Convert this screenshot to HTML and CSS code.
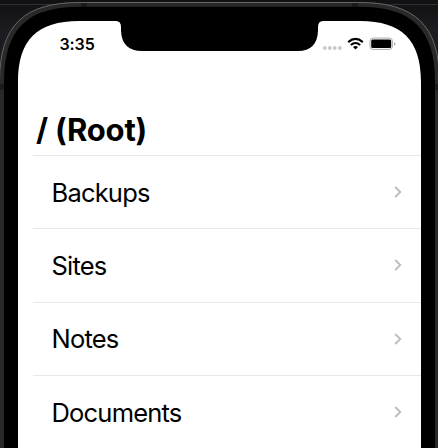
FILE: index.html
```html
<!DOCTYPE html>
<html lang="en">
<head>
<meta charset="utf-8">
<title>Root</title>
<link rel="stylesheet" href="styles.css">
</head>
<body>
<main class="device">
  <svg class="frame" viewBox="0 0 438 448" aria-hidden="true">
    <path d="M0 4.5H438" stroke="#302f32" stroke-width="1"/>
    <path d="M-.5 460V82C-.5 24 25 2 80 2H359C414 2 439.5 24 439.5 82V460Z" fill="#29292a"/>
    <path d="M-.5 460V82C-.5 24 25 2.5 80 2.5H359C414 2.5 439.5 24 439.5 82V460" fill="none" stroke="#656566"/>
    <path d="M81 3h6v4h-6zM352 3h6v4h-6zM0 84h4v6H0zM435 84h3v6h-3z" fill="#1b1b1c"/>
    <path d="M4 460V82C4 28 28 6.7 80 6.7H359C411 6.7 435 28 435 82V460Z" fill="#000"/>
    <path d="M18 460V82C18 40 37 21 79 21H116Q121 21 121 27V31Q122 51 142 51H298Q317 51 318 31V27Q318 21 323 21H360C402 21 421 40 421 82V460Z" fill="#fff"/>
  </svg>
  <section class="screen">
    <header class="status">
      <time class="clock">3:35</time>
      <svg class="indicators" width="76" height="16" viewBox="0 0 76 16" aria-hidden="true">
        <g fill="#c9c9ca"><circle cx="4.8" cy="12" r="1.9"/><circle cx="9.8" cy="12" r="1.9"/><circle cx="14.8" cy="12" r="1.9"/><circle cx="19.9" cy="12" r="1.9"/></g>
        <g fill="none" stroke="#000" stroke-width="2.1"><path d="M28.2 6.1Q35.5-.2 42.8 6.1"/><path d="M30.8 9Q35.5 5 40.2 9"/></g>
        <path d="M33 11Q35.5 9 38 11L35.5 13.5Z"/>
        <rect x="50" y="2.1" width="22.4" height="11.3" rx="3" fill="#fff" stroke="#aaa"/>
        <rect x="51.2" y="3.5" width="20" height="8.6" rx="1.5"/>
        <path d="M74 5.9Q75.5 6.2 75.5 7.8T74 9.7Z" fill="#aaa"/>
      </svg>
    </header>
    <h1 class="title">/ (Root)</h1>
    <ul class="list">
      <li class="row"><span>Backups</span><svg class="chevron" viewBox="0 0 8 14"><path d="M1.2 2 6.3 7 1.2 12"/></svg></li>
      <li class="row"><span>Sites</span><svg class="chevron" viewBox="0 0 8 14"><path d="M1.2 2 6.3 7 1.2 12"/></svg></li>
      <li class="row"><span>Notes</span><svg class="chevron" viewBox="0 0 8 14"><path d="M1.2 2 6.3 7 1.2 12"/></svg></li>
      <li class="row"><span>Documents</span><svg class="chevron" viewBox="0 0 8 14"><path d="M1.2 2 6.3 7 1.2 12"/></svg></li>
    </ul>
  </section>
</main>
</body>
</html>
```
FILE: styles.css
```css
* { box-sizing: border-box; }
body { margin: 0; overflow: hidden; font-family: Inter, "Liberation Sans", sans-serif; color: #000; }
.device { display: grid; width: 438px; height: 448px; overflow: hidden; background: linear-gradient(#111113, #1b1b20 30px, #1b1b20); }
.frame, .screen { grid-area: 1 / 1; }
.frame { width: 438px; height: 448px; }
.screen { z-index: 1; height: 448px; margin: 0 17px 0 18px; overflow: hidden; }
.status { display: flex; justify-content: space-between; height: 112px; padding: 36px 25px 0 41.5px; }
.clock { font-size: 16px; line-height: 16px; font-weight: 600; letter-spacing: -.1px; }
.indicators { flex: none; }
.title { margin: 0 0 0 18px; height: 43px; font-size: 31px; line-height: 36px; font-weight: 700; letter-spacing: -.2px; }
.list { margin: 0 0 0 15px; padding: 0; list-style: none; }
.row { display: flex; align-items: center; justify-content: space-between; height: 73.3px; padding: 0 19px 0 18.5px; border-top: 1px solid #e8e8e9; font-size: 25.5px; letter-spacing: -.8px; }
.chevron { width: 8px; height: 14px; flex: none; }
.chevron path { fill: none; stroke: #bdbdbf; stroke-width: 1.9; }
```
